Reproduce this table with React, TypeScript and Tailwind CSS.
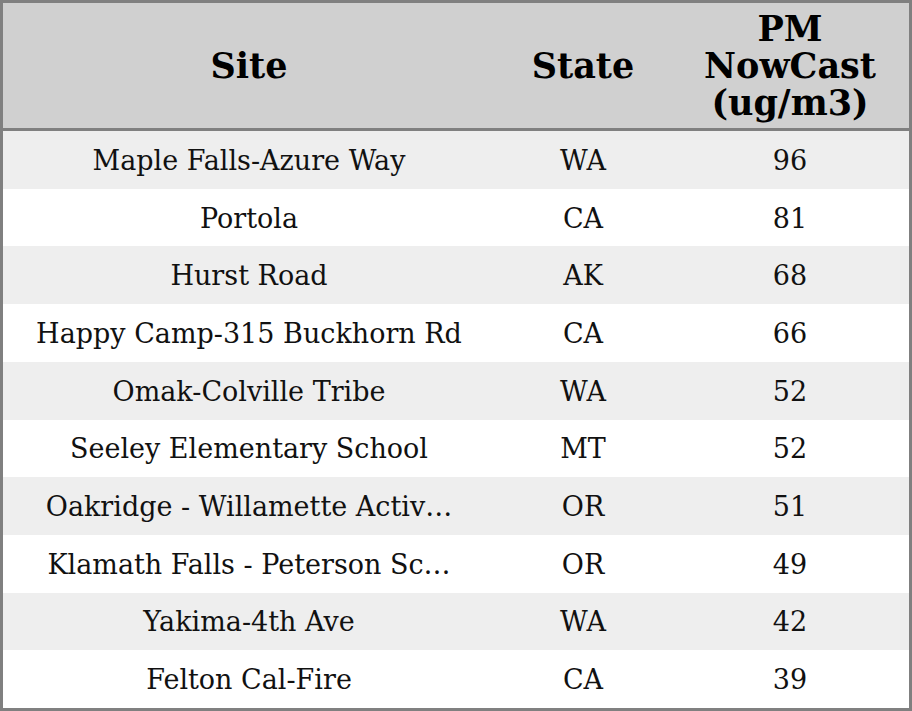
import React from "react";

const rows: [string, string, string][] = [
  ["Maple Falls-Azure Way", "WA", "96"],
  ["Portola", "CA", "81"],
  ["Hurst Road", "AK", "68"],
  ["Happy Camp-315 Buckhorn Rd", "CA", "66"],
  ["Omak-Colville Tribe", "WA", "52"],
  ["Seeley Elementary School", "MT", "52"],
  ["Oakridge - Willamette Activity Center", "OR", "51"],
  ["Klamath Falls - Peterson School", "OR", "49"],
  ["Yakima-4th Ave", "WA", "42"],
  ["Felton Cal-Fire", "CA", "39"],
];

const shorten = (s: string) => (s.length > 28 ? s.slice(0, 27) + "\u2026" : s);

export default function App() {
  return (
    <div
      className="w-[912px] h-[711px] border-[3px] border-[#808080] flex flex-col bg-white text-[#111]"
      style={{ fontFamily: '"DejaVu Serif", serif' }}
    >
      <div className="h-[128px] shrink-0 grid grid-cols-[492px_176px_238px] bg-[#d0d0d0] border-b-[3px] border-[#808080] font-bold text-[35px] leading-[36.7px] text-black">
        <div className="flex items-center justify-center text-center pt-[2px]">Site</div>
        <div className="flex items-center justify-center text-center pt-[2px]">State</div>
        <div className="flex items-center justify-center text-center pt-[2px]">
          PM
          <br />
          NowCast
          <br />
          (ug/m3)
        </div>
      </div>
      <div className="flex-1 flex flex-col text-[27px] leading-[32px]">
        {rows.map((r, i) => (
          <div
            key={i}
            className={`flex-1 grid grid-cols-[492px_176px_238px] items-center ${i % 2 === 0 ? "bg-[#eeeeee]" : "bg-white"}`}
          >
            <div className="text-center whitespace-nowrap pt-[2px]">{shorten(r[0])}</div>
            <div className="text-center pt-[2px]">{r[1]}</div>
            <div className="text-center pt-[2px]">{r[2]}</div>
          </div>
        ))}
      </div>
    </div>
  );
}
